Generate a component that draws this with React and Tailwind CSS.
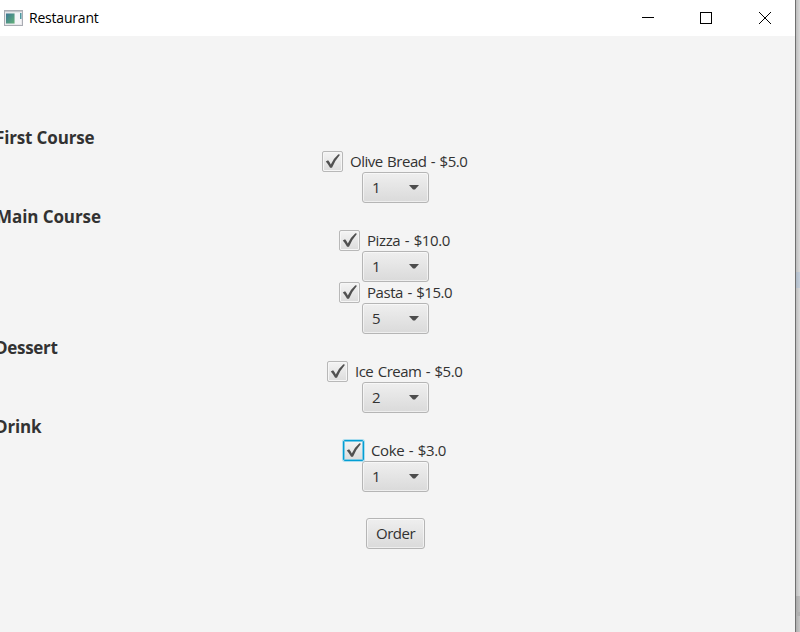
const courses = [
  { title: 'First Course', shift: '-ml-[5px] tracking-[-0.15px]', items: [{ name: 'Olive Bread - $5.0', qty: 1, pad: 'pl-[322px]', track: 'tracking-[-0.49px]' }] },
  {
    title: 'Main Course',
    shift: '-ml-[4px] tracking-[-0.08px]',
    items: [
      { name: 'Pizza - $10.0', qty: 1, pad: 'pl-[339px]', track: 'tracking-[-0.4px]' },
      { name: 'Pasta - $15.0', qty: 5, pad: 'pl-[339px]', track: 'tracking-[-0.45px]' },
    ],
  },
  { title: 'Dessert', shift: '-ml-[5px] tracking-[-0.3px]', items: [{ name: 'Ice Cream - $5.0', qty: 2, pad: 'pl-[327px]', track: 'tracking-[-0.5px]' }] },
  { title: 'Drink', shift: '-ml-[5px] tracking-[-0.15px]', items: [{ name: 'Coke - $3.0', qty: 1, pad: 'pl-[343px]', track: 'tracking-[-0.37px]', focused: true }] },
];

function CheckBox({ focused }) {
  return (
    <span
      className={
        'flex h-[21px] w-[21px] shrink-0 items-center justify-center rounded-[2px] border bg-gradient-to-b from-[#f4f4f4] to-[#dcdcdc] ' +
        (focused ? 'border-[#039ed3] shadow-[0_0_0_1px_#a9dcee,inset_0_0_0_1px_#7bc8e4]' : 'border-[#b8b8b8] shadow-[inset_0_0_0_1px_#f6f6f6]')
      }
    >
      <svg className="shrink-0" width="15" height="15" viewBox="0 0 15 15">
        <path d="M0.8 7.6 L3.1 6.2 Q4.8 8.1 5.8 10.4 Q8.8 4.2 13.4 0.3 L15 0.7 Q10 6.3 7 13.8 L5.1 13.8 Q3.2 10.2 0.8 7.6 Z" fill="#505050" />
      </svg>
    </span>
  );
}

function ComboBox({ value }) {
  return (
    <div className="ml-[362px] flex h-[31px] w-[67px] items-center justify-between rounded-[3px] border border-[#b5b5b5] bg-gradient-to-b from-[#efefef] to-[#dadada] pr-[9px] pl-[9px] shadow-[inset_0_0_0_1px_rgba(255,255,255,0.55)]">
      <span className="text-[15px] leading-[15px]">{value}</span>
      <svg width="10" height="5" viewBox="0 0 10 5">
        <path d="M0 0 H10 L6 4.6 H4 Z" fill="#4c4c4c" />
      </svg>
    </div>
  );
}

function TitleBar() {
  return (
    <header className="flex h-9 items-center bg-white pl-1 text-black">
      <svg width="19" height="16" viewBox="0 0 19 16">
        <defs>
          <linearGradient id="pane" x1="0" y1="0" x2="1" y2="1">
            <stop offset="0" stopColor="#3c7794" />
            <stop offset="1" stopColor="#62b178" />
          </linearGradient>
        </defs>
        <rect x="0.5" y="0.5" width="18" height="15" fill="#e9e9ec" stroke="#a9acb3" />
        <path d="M1 1.5H18" stroke="#c5c7cc" />
        <rect x="2" y="3.5" width="8.5" height="10" fill="url(#pane)" />
        <rect x="11" y="3" width="6" height="11" fill="#f5f5f8" />
        <rect x="16" y="3" width="1.5" height="6" fill="#4c98a0" />
      </svg>
      <h1 className="ml-[6px] text-[14px] leading-[18px] tracking-[-0.2px]">Restaurant</h1>
      <svg className="mr-[24px] ml-auto" width="130" height="14" viewBox="0 0 130 14" fill="none" stroke="#000">
        <path d="M1 6.5H13" />
        <rect x="59.5" y="1.5" width="11" height="11" />
        <path d="M118 1L130 13M130 1L118 13" />
      </svg>
    </header>
  );
}

export default function App() {
  return (
    <div className="flex h-[632px] w-[800px] overflow-hidden font-['Open_Sans','Noto_Sans',sans-serif] text-[#323232]">
      <main className="w-[796px] border-r border-[#707070] bg-[#f4f4f4]">
        <TitleBar />
        <div className="pt-[88px]">
          {courses.map((c) => (
            <section key={c.title}>
              <h2 className={'h-[27px] text-[17px] leading-[27px] font-bold whitespace-nowrap ' + c.shift}>{c.title}</h2>
              {c.items.map((i) => (
                <div key={i.name}>
                  <label className={'flex h-[21px] items-center gap-[7px] text-[15px] leading-[21px] whitespace-nowrap [word-spacing:1px] ' + i.pad}>
                    <CheckBox focused={i.focused} />
                    <span className={i.track}>{i.name}</span>
                  </label>
                  <ComboBox value={i.qty} />
                </div>
              ))}
            </section>
          ))}
          <button className="mt-[26px] ml-[366px] flex h-[31px] w-[59px] items-center justify-center rounded-[3px] border border-[#b5b5b5] bg-gradient-to-b from-[#efefef] to-[#dadada] text-[15px] tracking-[-0.5px] shadow-[inset_0_0_0_1px_rgba(255,255,255,0.55)]">
            Order
          </button>
        </div>
      </main>
      <aside className="flex w-1 flex-col bg-[#d0d0d0]">
        <div className="h-[272px] bg-gradient-to-r from-[#bdbdbd] to-[#dadada]" />
        <div className="h-4 bg-gradient-to-r from-[#aeb9c5] to-[#c4cfdc]" />
        <div className="h-[308px] bg-gradient-to-r from-[#bdbdbd] to-[#dadada]" />
        <div className="h-4 bg-gradient-to-r from-[#a9a9a9] to-[#bfbfbf]" />
        <div className="h-1 bg-[#b0b0b0]" />
        <div className="flex-1 bg-gradient-to-r from-[#adadad] to-[#c8c8c8]" />
      </aside>
    </div>
  );
}
